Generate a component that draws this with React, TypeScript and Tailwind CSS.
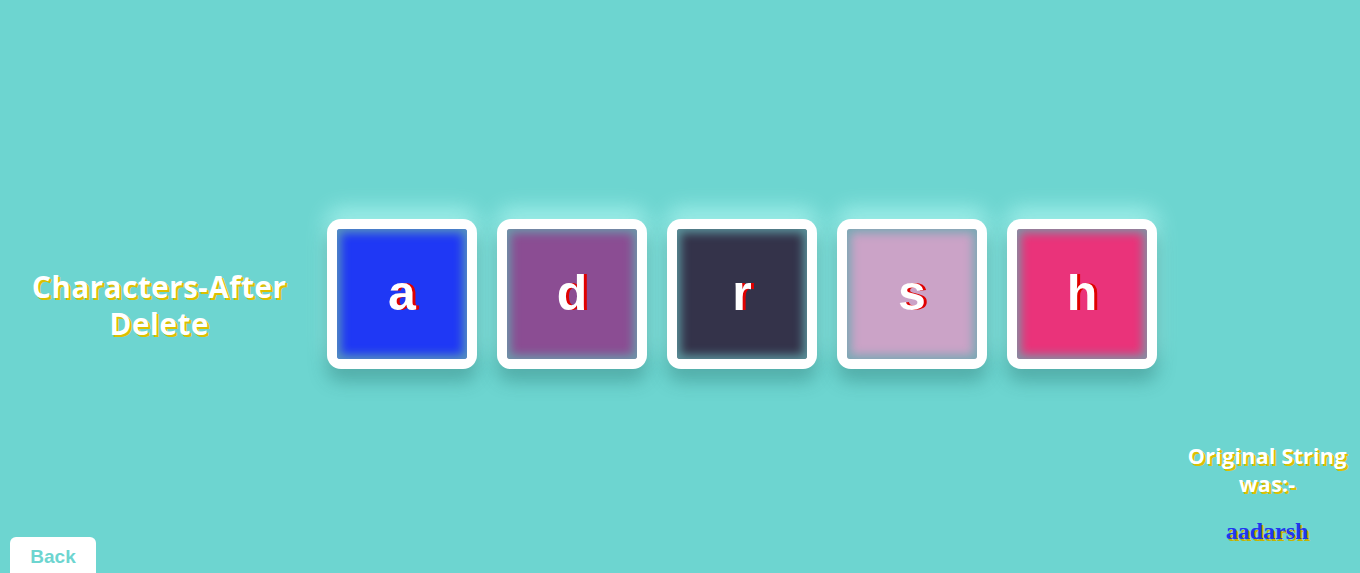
const letters = [
  { ch: 'a', bg: 'bg-[#1f38f5]' },
  { ch: 'd', bg: 'bg-[#8b4d93]' },
  { ch: 'r', bg: 'bg-[#34334a]' },
  { ch: 's', bg: 'bg-[#cba3c7]' },
  { ch: 'h', bg: 'bg-[#ea337a]' },
];

function LetterBox({ ch, bg }: { ch: string; bg: string }) {
  return (
    <div className="h-[150px] w-[150px] rounded-[14px] bg-white p-[10px] shadow-[0_12px_18px_rgba(40,120,115,0.45),0_-10px_22px_rgba(170,245,240,0.9)]">
      <div
        className={`flex h-full w-full items-center justify-center rounded-[3px] ${bg} shadow-[inset_0_0_10px_4px_rgba(100,170,175,0.8)]`}
      >
        <span className="font-['Liberation_Sans',Arial,sans-serif] text-[50px] leading-none font-bold text-white [text-shadow:3px_0_0_#e00000] -mt-[2px]">
          {ch}
        </span>
      </div>
    </div>
  );
}

export default function App() {
  return (
    <div className="relative h-[573px] w-[1360px] overflow-hidden bg-[#6dd5d0] font-['Open_Sans',sans-serif]">
      <div className="flex h-full">
        <div className="flex w-[318px] items-start justify-center pt-[268px]">
          <h2 className="text-center text-[30px] leading-[37px] font-bold tracking-[0.3px] text-white [text-shadow:2px_2px_0_#dcc000]">
            Characters-After
            <br />
            Delete
          </h2>
        </div>
        <div className="ml-[9px] flex gap-[20px] pt-[219px]">
          {letters.map((l) => (
            <LetterBox key={l.ch} ch={l.ch} bg={l.bg} />
          ))}
        </div>
        <div className="ml-auto flex w-[186px] flex-col items-center justify-end pb-[24px]">
          <h3 className="text-center text-[22px] leading-[28px] font-bold text-white [text-shadow:2px_2px_0_#dcc000]">
            Original String
            <br />
            was:-
          </h3>
          <p className="mt-[16px] font-['Liberation_Serif',serif] text-[24px] font-bold text-[#2236ee] [text-shadow:2px_2px_0_#c8b400]">
            aadarsh
          </p>
        </div>
      </div>
      <button className="absolute bottom-0 left-[10px] h-[36px] w-[86px] rounded-t-[6px] bg-white pt-[4px] font-['Liberation_Sans',Arial,sans-serif] text-[19px] font-bold text-[#6dd5d0]">
        Back
      </button>
    </div>
  );
}
